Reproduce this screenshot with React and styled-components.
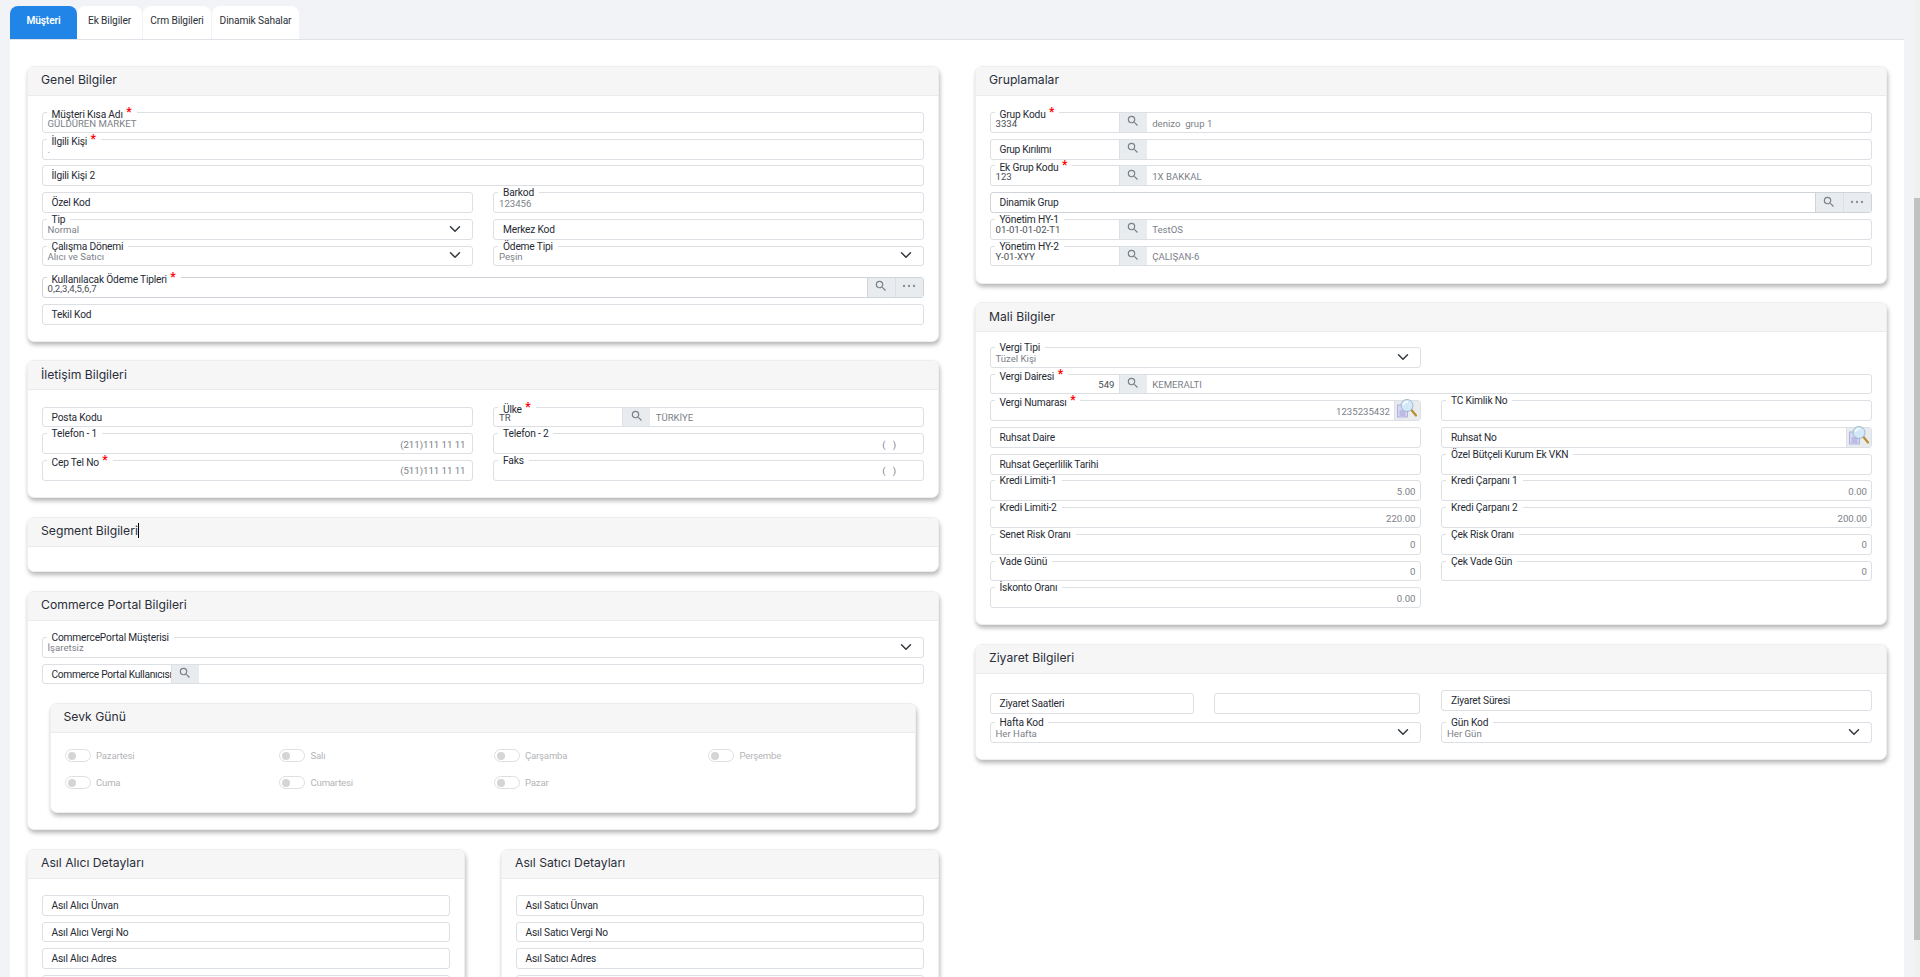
import React from 'react';
import styled, { createGlobalStyle } from 'styled-components';
import { MdSearch } from 'react-icons/md';

const GlobalStyle = createGlobalStyle`
  html, body { margin: 0; padding: 0; height: 100%; background: #f1f3f7; overflow: hidden; }
  * { box-sizing: border-box; }
  body { font-family: Roboto, "Noto Sans", sans-serif; }
`;

const Chevron = () => (
  <svg width="12" height="12" viewBox="0 0 16 16" fill="none" stroke="#343a40" strokeWidth="2" strokeLinecap="round" strokeLinejoin="round">
    <path d="m2 5 6 6 6-6" />
  </svg>
);

const Dots = () => (
  <svg width="14" height="4" viewBox="0 0 14 4" fill="#868c92">
    <circle cx="2" cy="2" r="1.15" />
    <circle cx="7" cy="2" r="1.15" />
    <circle cx="12" cy="2" r="1.15" />
  </svg>
);

// Sayfa + büyüteç ikonu
const DocSearch = () => (
  <svg width="20" height="19" viewBox="0 0 20 19">
    <rect x="0.5" y="6" width="10" height="12" fill="#d9d8f2" stroke="#a6a5d8" strokeWidth="0.8" />
    <path d="M2.5 12h6M2.5 14h6M2.5 16h6" stroke="#9a98d2" strokeWidth="0.9" />
    <path d="M14.5 11 19 16.5" stroke="#b98f30" strokeWidth="2.2" strokeLinecap="round" />
    <circle cx="10" cy="6.5" r="6" fill="#d3eafa" fillOpacity="0.95" stroke="#9fb9c9" strokeWidth="1" />
    <path d="M6.5 5.5c.7-1.8 2.4-2.8 4-2.6" fill="none" stroke="#fff" strokeWidth="1.4" strokeLinecap="round" />
  </svg>
);

function Field({ label, req, value, right, dark, pad, lookup, desc, select, dots, mag, strong, push, full, float }) {
  const floating = Boolean(value) || float;
  const inner = floating ? (
    <Value $right={right} $dark={dark} $pad={pad}>
      {value}
    </Value>
  ) : (
    <StaticLabel>{label}</StaticLabel>
  );

  return (
    <FieldBox $strong={strong} $push={push} $full={full}>
      {floating && (
        <FloatLabel>
          {label}
          {req && <Star>*</Star>}
        </FloatLabel>
      )}
      <FieldRow>
        {lookup ? <CodePart>{inner}</CodePart> : inner}
        {lookup && (
          <AddonButton>
            <MdSearch size={14} />
          </AddonButton>
        )}
        {lookup && <Desc>{desc}</Desc>}
        {select && (
          <ChevronSlot>
            <Chevron />
          </ChevronSlot>
        )}
        {dots && (
          <>
            <AddonButton $first>
              <MdSearch size={14} />
            </AddonButton>
            <AddonButton>
              <Dots />
            </AddonButton>
          </>
        )}
        {mag && (
          <MagButton>
            <DocSearch />
          </MagButton>
        )}
      </FieldRow>
    </FieldBox>
  );
}

function Toggle({ label }) {
  return (
    <ToggleItem>
      <ToggleTrack>
        <ToggleKnob />
      </ToggleTrack>
      {label}
    </ToggleItem>
  );
}

export default function App() {
  return (
    <>
      <GlobalStyle />
      <Page>
        <Main>
          <Tabs>
            <Tab $active $w={67}>Müşteri</Tab>
            <Tab $w={65}>Ek Bilgiler</Tab>
            <Tab $w={68}>Crm Bilgileri</Tab>
            <Tab $w={87}>Dinamik Sahalar</Tab>
          </Tabs>
          <Panel>
            <Column>
              <Card>
                <CardHeader>Genel Bilgiler</CardHeader>
                <CardBody>
                  <Form>
                    <Field full label="Müşteri Kısa Adı" req value="GÜLDÜREN MARKET" />
                    <Field full label="İlgili Kişi" req value="." />
                    <Field full label="İlgili Kişi 2" />
                    <Field label="Özel Kod" />
                    <Field label="Barkod" value="123456" />
                    <Field label="Tip" value="Normal" select />
                    <Field label="Merkez Kod" />
                    <Field label="Çalışma Dönemi" value="Alıcı ve Satıcı" select />
                    <Field label="Ödeme Tipi" value="Peşin" select />
                    <Field full push strong dots label="Kullanılacak Ödeme Tipleri" req value="0,2,3,4,5,6,7" dark />
                    <Field full label="Tekil Kod" />
                  </Form>
                </CardBody>
              </Card>

              <Card>
                <CardHeader>İletişim Bilgileri</CardHeader>
                <CardBody>
                  <Form>
                    <Field label="Posta Kodu" />
                    <Field label="Ülke" req value="TR" dark lookup desc="TÜRKİYE" />
                    <Field label="Telefon - 1" value="(211)111 11 11" right pad={7} />
                    <Field label="Telefon - 2" value="(   )" right pad={28} />
                    <Field label="Cep Tel No" req value="(511)111 11 11" right pad={7} />
                    <Field label="Faks" value="(   )" right pad={28} />
                  </Form>
                </CardBody>
              </Card>

              <Card>
                <CardHeader>
                  Segment Bilgileri
                  <Caret />
                </CardHeader>
                <EmptyBody />
              </Card>

              <Card>
                <CardHeader>Commerce Portal Bilgileri</CardHeader>
                <CardBody>
                  <Form>
                    <Field full label="CommercePortal Müşterisi" value="İşaretsiz" select />
                    <Field full label="Commerce Portal Kullanıcısı" lookup />
                  </Form>
                  <InnerCard>
                    <CardHeader>Sevk Günü</CardHeader>
                    <ToggleGrid>
                      {['Pazartesi', 'Salı', 'Çarşamba', 'Perşembe', 'Cuma', 'Cumartesi', 'Pazar'].map(day => (
                        <Toggle key={day} label={day} />
                      ))}
                    </ToggleGrid>
                  </InnerCard>
                </CardBody>
              </Card>

              <CardRow>
                <Card>
                  <CardHeader>Asıl Alıcı Detayları</CardHeader>
                  <CardBody>
                    <Form $single>
                      <Field label="Asıl Alıcı Ünvan" />
                      <Field label="Asıl Alıcı Vergi No" />
                      <Field label="Asıl Alıcı Adres" />
                      <FieldBox />
                    </Form>
                  </CardBody>
                </Card>
                <Card>
                  <CardHeader>Asıl Satıcı Detayları</CardHeader>
                  <CardBody>
                    <Form $single>
                      <Field label="Asıl Satıcı Ünvan" />
                      <Field label="Asıl Satıcı Vergi No" />
                      <Field label="Asıl Satıcı Adres" />
                      <FieldBox />
                    </Form>
                  </CardBody>
                </Card>
              </CardRow>
            </Column>

            <Column>
              <Card>
                <CardHeader>Gruplamalar</CardHeader>
                <CardBody>
                  <Form>
                    <Field full label="Grup Kodu" req value="3334" dark lookup desc="denizo  grup 1" />
                    <Field full label="Grup Kırılımı" lookup />
                    <Field full label="Ek Grup Kodu" req value="123" dark lookup desc="1X BAKKAL" />
                    <Field full strong dots label="Dinamik Grup" />
                    <Field full label="Yönetim HY-1" value="01-01-01-02-T1" dark lookup desc="TestOS" />
                    <Field full label="Yönetim HY-2" value="Y-01-XYY" dark lookup desc="ÇALIŞAN-6" />
                  </Form>
                </CardBody>
              </Card>

              <Card>
                <CardHeader>Mali Bilgiler</CardHeader>
                <CardBody $top={14.9}>
                  <Form>
                    <Field label="Vergi Tipi" value="Tüzel Kişi" select />
                    <div />
                    <Field full label="Vergi Dairesi" req value="549" right dark lookup desc="KEMERALTI" />
                    <Field label="Vergi Numarası" req value="1235235432" right mag />
                    <Field label="TC Kimlik No" float />
                    <Field label="Ruhsat Daire" />
                    <Field label="Ruhsat No" mag />
                    <Field label="Ruhsat Geçerlilik Tarihi" />
                    <Field label="Özel Bütçeli Kurum Ek VKN" float />
                    <Field label="Kredi Limiti-1" value="5.00" right />
                    <Field label="Kredi Çarpanı 1" value="0.00" right />
                    <Field label="Kredi Limiti-2" value="220.00" right />
                    <Field label="Kredi Çarpanı 2" value="200.00" right />
                    <Field label="Senet Risk Oranı" value="0" right />
                    <Field label="Çek Risk Oranı" value="0" right />
                    <Field label="Vade Günü" value="0" right />
                    <Field label="Çek Vade Gün" value="0" right />
                    <Field label="İskonto Oranı" value="0.00" right />
                  </Form>
                </CardBody>
              </Card>

              <Card>
                <CardHeader>Ziyaret Bilgileri</CardHeader>
                <CardBody>
                  <Form>
                    <VisitHours>
                      <Field label="Ziyaret Saatleri" />
                      <FieldBox />
                    </VisitHours>
                    <Field label="Ziyaret Süresi" />
                    <Field label="Hafta Kod" value="Her Hafta" select />
                    <Field label="Gün Kod" value="Her Gün" select />
                  </Form>
                </CardBody>
              </Card>
            </Column>
          </Panel>
        </Main>
        <ScrollRail>
          <ScrollTrack>
            <ScrollThumb />
          </ScrollTrack>
        </ScrollRail>
      </Page>
    </>
  );
}

const Page = styled.div`
  display: flex;
  width: 1920px;
  height: 977px;
  overflow: hidden;
  padding-left: 10px;
  background: #f1f3f7;
`;
const Main = styled.div`
  flex: 1;
  min-width: 0;
  display: flex;
  flex-direction: column;
  padding-top: 6px;
`;
const Tabs = styled.div`
  display: flex;
  height: 34px;
  border-bottom: 1px solid #dfe2e6;
`;
const Tab = styled.div`
  width: ${props => props.$w}px;
  height: 33px;
  margin-right: ${props => (props.$active ? 0 : 1)}px;
  display: flex;
  align-items: center;
  justify-content: center;
  padding-bottom: 4px;
  border-radius: 8px 8px 0 0;
  font-size: 10.2px;
  letter-spacing: -0.12px;
  font-weight: ${props => (props.$active ? 600 : 400)};
  color: ${props => (props.$active ? '#fff' : '#2b2f36')};
  background: ${props => (props.$active ? '#2185e8' : '#fff')};
`;
const Panel = styled.div`
  flex: 1;
  display: grid;
  grid-template-columns: 912px 912px;
  column-gap: 36px;
  align-items: start;
  padding: 26px 17px 0;
  background: #fff;
`;
const Column = styled.div`
  display: flex;
  flex-direction: column;
  gap: 18.6px;
`;
const CardRow = styled.div`
  display: grid;
  grid-template-columns: 437.5px 438px;
  column-gap: 36.5px;
`;
const Card = styled.section`
  border: 1px solid #eceef2;
  border-radius: 7px;
  background: #fff;
  box-shadow: 1px 3px 4px rgba(0, 0, 0, 0.28);
`;
const InnerCard = styled(Card)`
  margin: 18.6px 7.6px 0 8px;
`;
const CardHeader = styled.header`
  display: flex;
  align-items: center;
  height: 28.8px;
  padding: 0 0 2px 13px;
  border-bottom: 1px solid #e9ebee;
  border-radius: 7px 7px 0 0;
  background: #f6f6f7;
  font-family: Inter, "Open Sans", sans-serif;
  font-size: 12.2px;
  color: #2a2e38;
`;
const Caret = styled.span`
  width: 1px;
  height: 15px;
  background: #000;
`;
const CardBody = styled.div`
  padding: ${props => props.$top ?? 16.3}px 14px 16.4px 13.5px;
`;
const EmptyBody = styled.div`
  height: 24.6px;
`;
const Form = styled.div`
  display: grid;
  grid-template-columns: ${props => (props.$single ? '1fr' : '1fr 1fr')};
  gap: 5.9px 20.5px;
`;
const FieldBox = styled.div`
  display: flex;
  flex-direction: column;
  min-width: 0;
  height: 20.8px;
  ${props => props.$full && 'grid-column: 1 / -1;'}
  ${props => props.$push && 'margin-top: 4.8px;'}
  border: 1px solid ${props => (props.$strong ? '#ced4da' : '#dcdfe3')};
  border-radius: 3px;
  background: #fff;
`;
// Kenarlığın üstüne oturan etiket, satır yüksekliğini etkilemez
const FloatLabel = styled.label`
  align-self: flex-start;
  height: 10px;
  margin: -5px 0 -5px 4px;
  padding: 0 5px;
  line-height: 10px;
  white-space: nowrap;
  background: #fff;
  font-size: 10.2px;
  letter-spacing: -0.18px;
  color: #262a33;
`;
const Star = styled.span`
  display: inline-block;
  margin-left: 3.5px;
  color: #ff0000;
  font-size: 12px;
  font-weight: 700;
  line-height: 8px;
  vertical-align: 2px;
`;
const FieldRow = styled.div`
  flex: 1;
  min-height: 0;
  display: flex;
  align-items: stretch;
`;
const StaticLabel = styled.label`
  flex: 1;
  min-width: 0;
  padding-left: 9px;
  line-height: 20.4px;
  white-space: nowrap;
  overflow: hidden;
  font-size: 10.2px;
  letter-spacing: -0.18px;
  color: #262a33;
`;
const Value = styled.div`
  flex: 1;
  min-width: 0;
  padding: 3.5px ${props => (props.$pad ? props.$pad - 1 : 4)}px 0 5px;
  text-align: ${props => (props.$right ? 'right' : 'left')};
  line-height: 14px;
  white-space: pre;
  font-size: 9.6px;
  color: ${props => (props.$dark ? '#4a4e55' : '#7c7f88')};
`;
const CodePart = styled.div`
  display: flex;
  width: 128px;
  flex-shrink: 0;
  & > label {
    letter-spacing: -0.3px;
  }
`;
const AddonButton = styled.div`
  flex-shrink: 0;
  width: 28.2px;
  display: flex;
  align-items: center;
  justify-content: center;
  padding-bottom: 2px;
  background: #e9ecef;
  border-left: 1px solid ${props => (props.$first ? '#ced4da' : '#dcdfe3')};
  color: #7a8087;
`;
const Desc = styled.div`
  flex: 1;
  min-width: 0;
  padding: 3.5px 5px 0 5.5px;
  line-height: 14px;
  white-space: pre;
  font-size: 9.6px;
  color: #7c7f88;
`;
const ChevronSlot = styled.div`
  display: flex;
  align-items: center;
  padding-right: 11px;
  padding-bottom: 1px;
`;
const MagButton = styled.div`
  flex-shrink: 0;
  width: 25.5px;
  background: #e9ecef;
  display: flex;
  align-items: flex-start;
  justify-content: center;
  border-left: 1px solid #dcdfe3;
  & > svg {
    margin-top: -2px;
    flex-shrink: 0;
  }
`;
const VisitHours = styled.div`
  display: grid;
  grid-template-columns: 204px 205.5px;
  column-gap: 20.5px;
  margin: 3px 0 2.3px;
`;
const ToggleGrid = styled.div`
  display: grid;
  grid-template-columns: repeat(4, 214.5px);
  row-gap: 14px;
  padding: 16.5px 14px 22.7px;
`;
const ToggleItem = styled.div`
  display: flex;
  align-items: center;
  gap: 5.5px;
  height: 13px;
  font-size: 9.6px;
  letter-spacing: -0.2px;
  color: #b4b5b8;
`;
const ToggleTrack = styled.span`
  display: flex;
  align-items: center;
  width: 26px;
  height: 13px;
  padding-left: 2px;
  border: 1px solid #dcdfe3;
  border-radius: 7px;
  background: #fff;
`;
const ToggleKnob = styled.span`
  width: 8px;
  height: 8px;
  border-radius: 50%;
  background: #d5d5d5;
`;
const ScrollRail = styled.div`
  flex-shrink: 0;
  display: flex;
  justify-content: flex-end;
  width: 16px;
  background: #f1f3f7;
`;
const ScrollTrack = styled.div`
  width: 6px;
  padding-top: 198px;
  background: #f0f0f0;
`;
const ScrollThumb = styled.div`
  height: 742px;
  background: #c1c1c1;
`;
